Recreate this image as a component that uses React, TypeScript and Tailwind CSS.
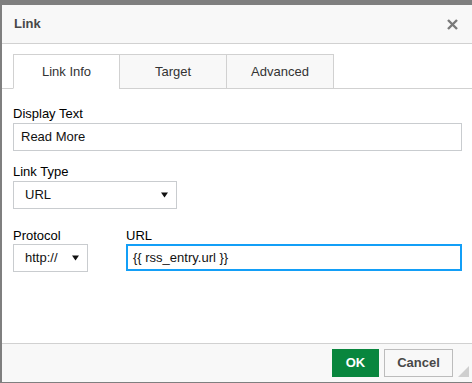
import React from "react";

const font = { fontFamily: '"Liberation Sans", Arial, sans-serif' };

function Tab({ label, active }: { label: string; active?: boolean }) {
    return (
        <div
            className={`h-[35px] -mb-px flex items-center justify-center border border-[#d1d1d1] text-[13px] text-[#333] ${
                active ? "w-[107px] bg-white border-b-white" : "w-[108px] bg-[#f8f8f8] -ml-px"
            }`}
        >
            {label}
        </div>
    );
}

function Arrow() {
    return (
        <svg width="7" height="6" viewBox="0 0 7 6" className="shrink-0">
            <path d="M0 0.5h7L3.5 5.5z" fill="#111" />
        </svg>
    );
}

export default function App() {
    return (
        <div className="w-[472px] h-[383px] bg-[#7f7f7f] pt-[5px] pl-[2px] overflow-hidden" style={font}>
            <div className="h-[377px] bg-white flex flex-col">

                {/* Header */}
                <div className="h-[39px] shrink-0 bg-[#f8f8f8] border-b border-[#d1d1d1] flex items-center justify-between pl-[12px] pr-[14px]">
                    <span className="text-[13px] font-bold text-[#484848]">Link</span>
                    <svg width="11" height="11" viewBox="0 0 11 11">
                        <path d="M1 1L10 10M10 1L1 10" stroke="#7a7a7a" strokeWidth="2.4" />
                    </svg>
                </div>

                {/* Tabs */}
                <div className="mt-[10px] pl-[11px] flex border-b border-[#d1d1d1]">
                    <Tab label="Link Info" active />
                    <Tab label="Target" />
                    <Tab label="Advanced" />
                </div>

                {/* Body */}
                <div className="flex-1 pl-[11px] pr-[10px] pt-[17px] text-[13px] text-black leading-[16px]">
                    <div className="mb-px">Display Text</div>
                    <div className="h-[28px] border border-[#c9cccf] flex items-center px-[7px] text-[#111]">
                        Read More
                    </div>

                    <div className="mt-[13px] mb-px">Link Type</div>
                    <div className="w-[164px] h-[28px] border border-[#c9cccf] flex items-center justify-between pl-[11px] pr-[8px] text-[#111]">
                        <span>URL</span>
                        <Arrow />
                    </div>

                    <div className="mt-[19px] flex gap-[38px]">
                        <div className="w-[75px]">
                            <div>Protocol</div>
                            <div className="h-[28px] border border-[#c9cccf] flex items-center justify-between pl-[11px] pr-[8px] text-[#111]">
                                <span>http://</span>
                                <Arrow />
                            </div>
                        </div>
                        <div className="flex-1">
                            <div>URL</div>
                            <div className="h-[27px] border-2 border-[#139ff7] flex items-center px-[5px] text-[#111]">
                                {"{{ rss_entry.url }}"}
                            </div>
                        </div>
                    </div>
                </div>

                {/* Footer */}
                <div className="h-[39px] shrink-0 bg-[#f8f8f8] border-t border-[#d1d1d1] relative flex items-start justify-end pt-[5px] pr-[19px] gap-[5px]">
                    <button className="w-[47px] h-[28px] bg-[#09863e] border border-[#09863e] text-white text-[13px] font-bold">
                        OK
                    </button>
                    <button className="w-[69px] h-[28px] bg-[#f8f8f8] border border-[#bcbcbc] text-[#484848] text-[13px] font-bold">
                        Cancel
                    </button>
                    <svg width="11" height="11" viewBox="0 0 11 11" className="absolute right-[3px] bottom-[5px]">
                        <path d="M11 0V11H0z" fill="#cfcfcf" />
                    </svg>
                </div>
            </div>
        </div>
    );
}
